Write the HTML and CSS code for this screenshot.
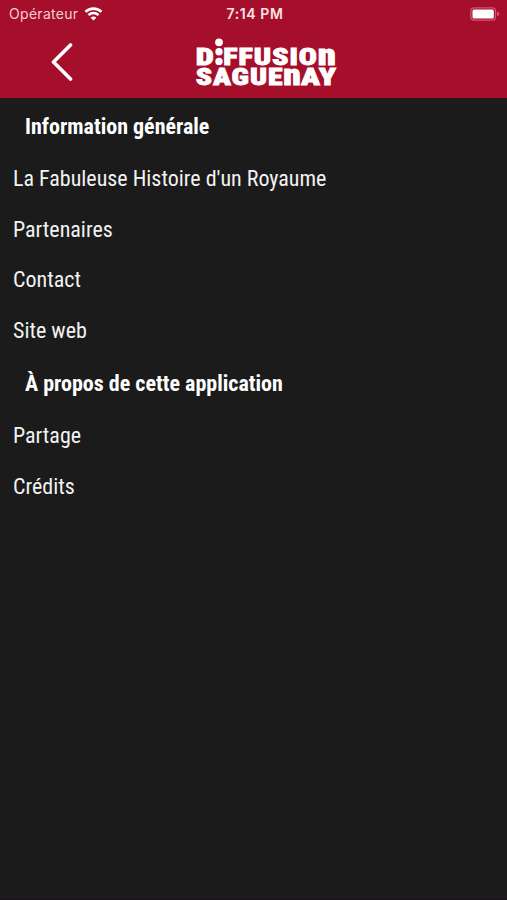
FILE: index.html
```html
<!DOCTYPE html>
<html lang="fr">
<head>
    <meta charset="UTF-8">
    <meta name="viewport" content="width=device-width, initial-scale=1.0">
    <title>Diffusion Saguenay</title>
    <link rel="stylesheet" href="styles.css">
</head>
<body>
    <header>
        <div class="status-bar">
            <div class="carrier">
                <span>Opérateur</span>
                <svg class="wifi" width="19" height="14" viewBox="0 0 18 14" fill="none" stroke="#fff" stroke-width="2.6">
                    <path d="M1 4.9C5.4 .5 12.6 .5 17 4.9"/>
                    <path d="M4 8.1C6.8 5.3 11.2 5.3 14 8.1"/>
                    <path d="M9 13.6L6.1 10.7C7.7 9.2 10.3 9.2 11.9 10.7Z" fill="#fff" stroke="none"/>
                </svg>
            </div>
            <span class="time">7:14 PM</span>
            <svg class="battery" width="31" height="14" viewBox="0 0 31 14">
                <rect x=".8" y=".8" width="24.7" height="12.4" rx="3.4" fill="none" stroke="#d0566f" stroke-width="1.3"/>
                <rect x="2.5" y="2.5" width="21.3" height="9" rx="1.5" fill="#fff"/>
                <path d="M27 4.6C30.2 5.8 30.2 8.2 27 9.4Z" fill="#d0566f"/>
            </svg>
        </div>
        <div class="nav-bar">
            <a class="back" href="#" aria-label="Retour">
                <svg width="22" height="40" viewBox="0 0 22 40" fill="none" stroke="#fff" stroke-width="3.6" stroke-linecap="round" stroke-linejoin="round">
                    <path d="M19.5 3L2.5 20L19.5 37"/>
                </svg>
            </a>
            <svg class="logo" width="142" height="50" viewBox="0 0 142 50">
                <text x="0.8" y="26.6" textLength="19" lengthAdjust="spacingAndGlyphs">D</text>
                <circle cx="24" cy="4.3" r="3.9"/>
                <circle cx="24" cy="13.8" r="3.7"/>
                <circle cx="24" cy="23.4" r="3.7"/>
                <text x="28.3" y="26.6" textLength="94.6" lengthAdjust="spacingAndGlyphs">FFUSIO</text>
                <text class="tall" x="122.8" y="26.6" textLength="19" lengthAdjust="spacingAndGlyphs">n</text>
                <text x="0.8" y="46.8" textLength="87.5" lengthAdjust="spacingAndGlyphs">SAGUE</text>
                <text class="tall" x="88.2" y="46.8" textLength="18.4" lengthAdjust="spacingAndGlyphs">n</text>
                <text x="106" y="46.8" textLength="36" lengthAdjust="spacingAndGlyphs">AY</text>
            </svg>
        </div>
    </header>

    <main>
        <h2>Information générale</h2>
        <ul>
            <li>La Fabuleuse Histoire d'un Royaume</li>
            <li>Partenaires</li>
            <li>Contact</li>
            <li>Site web</li>
        </ul>
        <h2>À propos de cette application</h2>
        <ul>
            <li>Partage</li>
            <li>Crédits</li>
        </ul>
    </main>
</body>
</html>
```
FILE: styles.css
```css
* {
    box-sizing: border-box;
}

body {
    display: flex;
    flex-direction: column;
    height: 100vh;
    margin: 0;
    background-color: #1b1b1b;
    border-bottom: 1px solid #1c101a;
    color: #f2f2f2;
    font-family: "Roboto Condensed", Roboto, sans-serif;
    font-stretch: 75%;
}

header {
    height: 99px;
    background-color: #a60f2b;
    border-bottom: 1px solid #36101a;
    color: white;
}

.status-bar {
    display: grid;
    grid-template-columns: 1fr auto 1fr;
    align-items: center;
    height: 27px;
    padding: 0 6px 0 9px;
    font-family: Inter, sans-serif;
    font-stretch: 100%;
    font-size: 14px;
}

.carrier {
    display: flex;
    align-items: center;
    gap: 6px;
    color: #f3cdd4;
    letter-spacing: 0.3px;
}

.time {
    font-weight: 600;
    letter-spacing: 0.6px;
    color: #fae4e8;
}

.battery {
    justify-self: end;
}

.nav-bar {
    display: grid;
    grid-template-columns: 195px 142px 1fr;
    height: 71px;
}

.back {
    padding: 15px 0 0 51px;
}

.logo {
    margin-top: 11px;
    fill: white;
}

.logo text {
    font-family: Roboto, sans-serif;
    font-stretch: 75%;
    font-size: 23.2px;
    font-weight: 900;
    letter-spacing: 0.7px;
    stroke: white;
    stroke-width: 0.8px;
}

.logo .tall {
    font-size: 30px;
}

h2 {
    height: 55px;
    margin: 0;
    padding-left: 25px;
    font-size: 22px;
    font-weight: 700;
    line-height: 55px;
    color: white;
}

ul {
    margin: 0;
    padding: 0;
    list-style: none;
}

li {
    height: 50.5px;
    padding-left: 13px;
    font-size: 22px;
    line-height: 50px;
}
```
